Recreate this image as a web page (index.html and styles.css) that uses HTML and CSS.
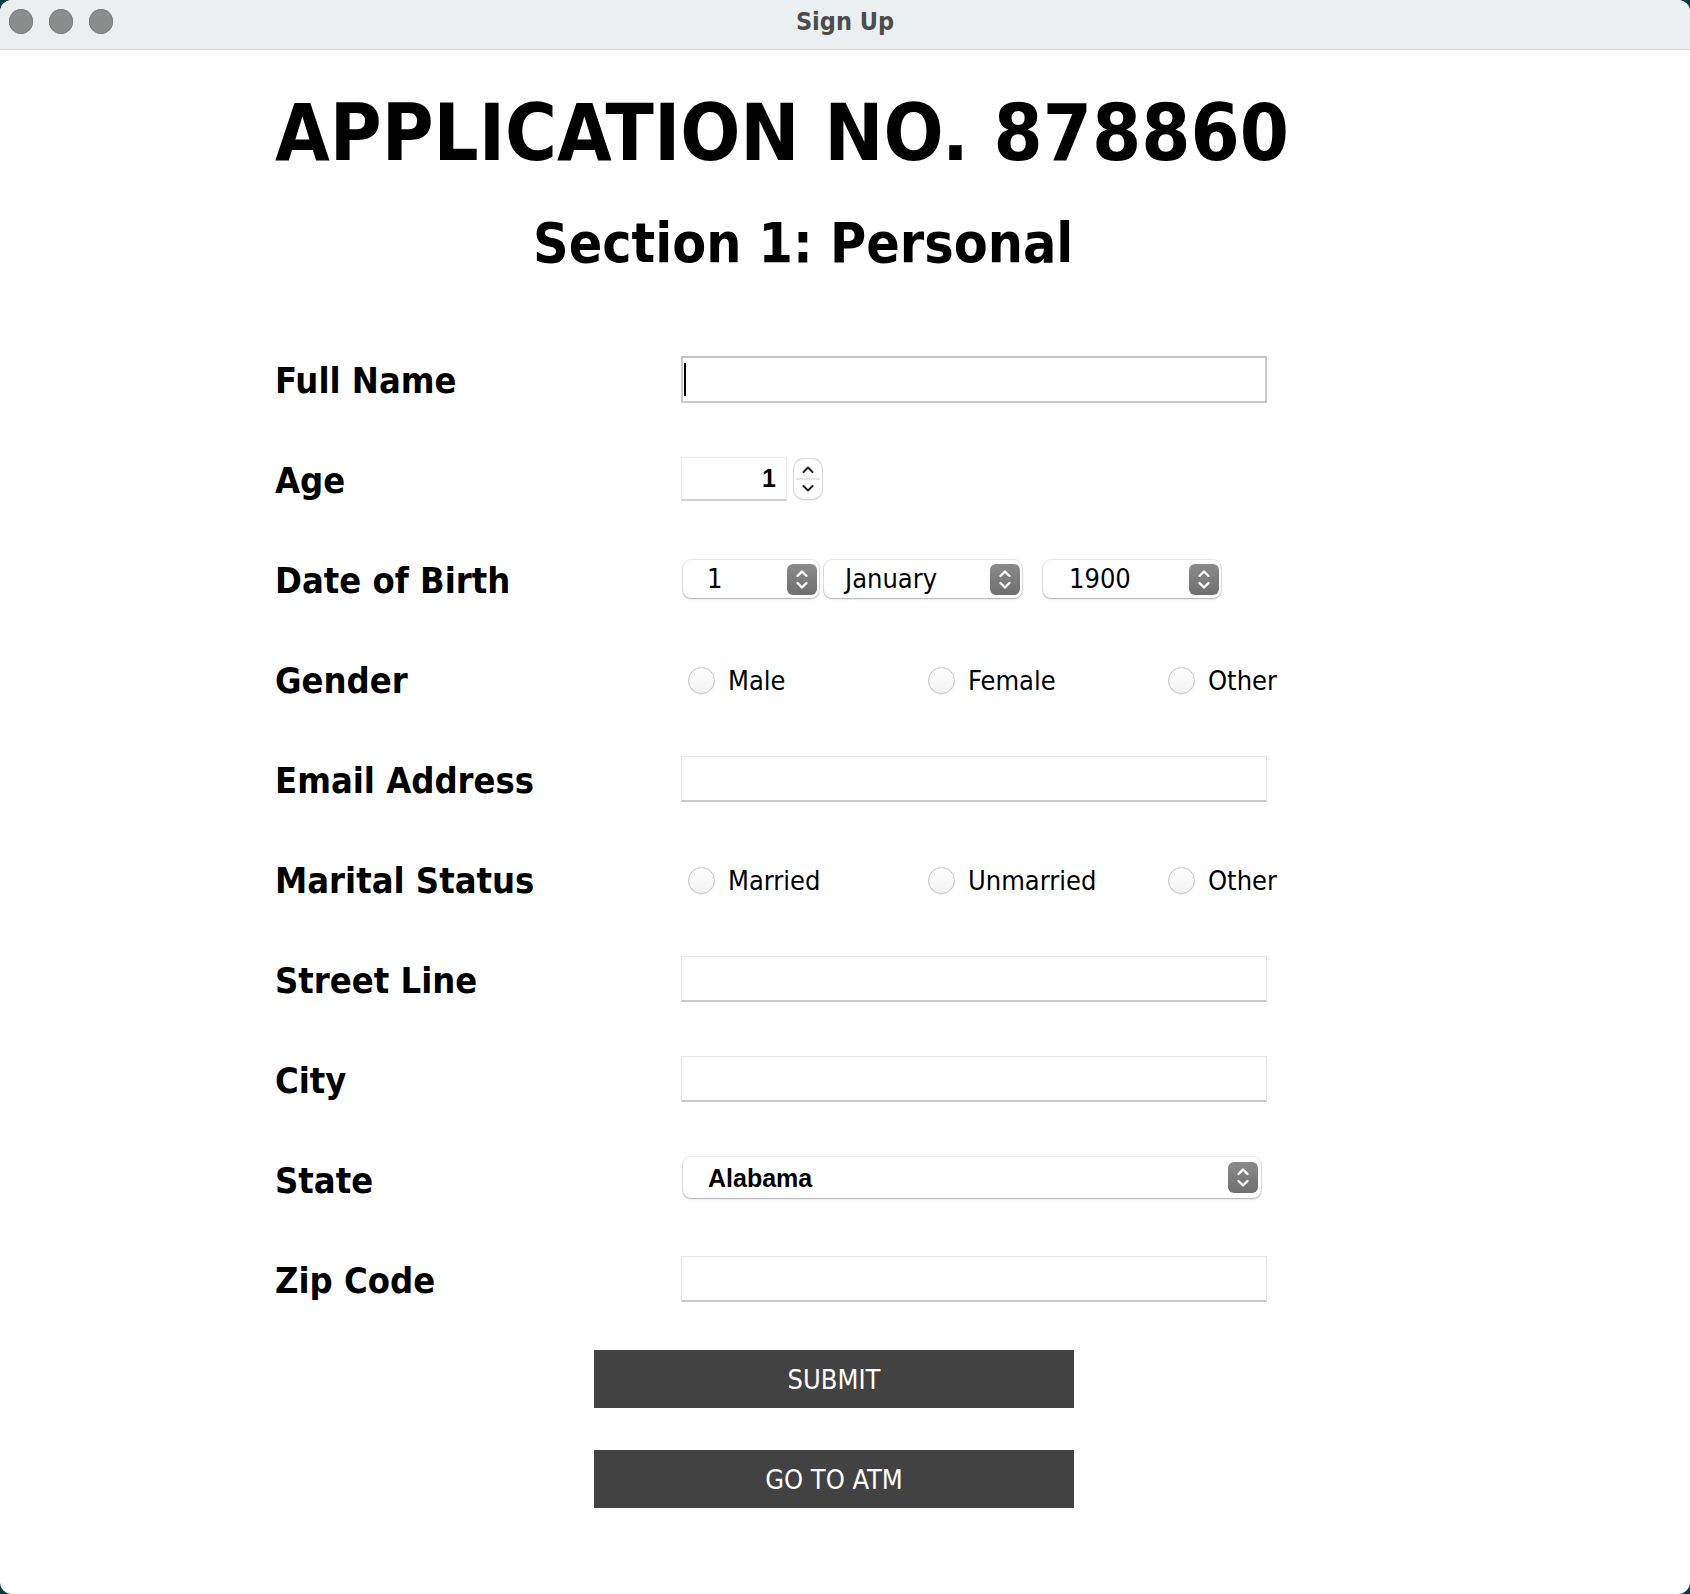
FILE: index.html
```html
<!DOCTYPE html>
<html lang="en">
<head>
<meta charset="utf-8">
<title>Sign Up</title>
<link rel="stylesheet" href="styles.css">
</head>
<body>
<div class="window">
  <header class="titlebar">
    <div class="lights"><span class="light"></span><span class="light"></span><span class="light"></span></div>
    <div class="wintitle">Sign Up</div>
    <div></div>
  </header>
  <main class="content">
    <h1 class="app-no">APPLICATION NO. 878860</h1>
    <h2 class="section">Section 1: Personal</h2>
    <div class="form">
      <div class="row">
        <span class="label">Full Name</span>
        <div class="textbox focused"><span class="caret"></span></div>
      </div>
      <div class="row">
        <span class="label">Age</span>
        <div class="spinner">
          <div class="numbox">1</div>
          <div class="stepper">
            <svg width="28" height="40" viewBox="0 0 28 40"><line x1="2" y1="20" x2="26" y2="20" stroke="#d6d6d6" stroke-width="1.2"/><path d="M9.5 13 L14 8.5 L18.5 13" fill="none" stroke="#222" stroke-width="2" stroke-linecap="round" stroke-linejoin="round"/><path d="M9.5 27 L14 31.5 L18.5 27" fill="none" stroke="#222" stroke-width="2" stroke-linecap="round" stroke-linejoin="round"/></svg>
          </div>
        </div>
      </div>
      <div class="row">
        <span class="label">Date of Birth</span>
        <div class="dob">
          <div class="combo combo-day"><span class="combo-text">1</span><span class="combo-btn"><svg width="30" height="31" viewBox="0 0 30 31"><path d="M10.5 12 L15 7.5 L19.5 12" fill="none" stroke="#fff" stroke-width="2.4" stroke-linecap="round" stroke-linejoin="round"/><path d="M10.5 19 L15 23.5 L19.5 19" fill="none" stroke="#fff" stroke-width="2.4" stroke-linecap="round" stroke-linejoin="round"/></svg></span></div>
          <div class="combo combo-month"><span class="combo-text">January</span><span class="combo-btn"><svg width="30" height="31" viewBox="0 0 30 31"><path d="M10.5 12 L15 7.5 L19.5 12" fill="none" stroke="#fff" stroke-width="2.4" stroke-linecap="round" stroke-linejoin="round"/><path d="M10.5 19 L15 23.5 L19.5 19" fill="none" stroke="#fff" stroke-width="2.4" stroke-linecap="round" stroke-linejoin="round"/></svg></span></div>
          <div class="combo combo-year"><span class="combo-text">1900</span><span class="combo-btn"><svg width="30" height="31" viewBox="0 0 30 31"><path d="M10.5 12 L15 7.5 L19.5 12" fill="none" stroke="#fff" stroke-width="2.4" stroke-linecap="round" stroke-linejoin="round"/><path d="M10.5 19 L15 23.5 L19.5 19" fill="none" stroke="#fff" stroke-width="2.4" stroke-linecap="round" stroke-linejoin="round"/></svg></span></div>
        </div>
      </div>
      <div class="row">
        <span class="label">Gender</span>
        <div class="radios">
          <div class="radio"><span class="dot"></span><span class="radio-text">Male</span></div>
          <div class="radio"><span class="dot"></span><span class="radio-text">Female</span></div>
          <div class="radio"><span class="dot"></span><span class="radio-text">Other</span></div>
        </div>
      </div>
      <div class="row">
        <span class="label">Email Address</span>
        <div class="textbox"></div>
      </div>
      <div class="row">
        <span class="label">Marital Status</span>
        <div class="radios">
          <div class="radio"><span class="dot"></span><span class="radio-text">Married</span></div>
          <div class="radio"><span class="dot"></span><span class="radio-text">Unmarried</span></div>
          <div class="radio"><span class="dot"></span><span class="radio-text">Other</span></div>
        </div>
      </div>
      <div class="row">
        <span class="label">Street Line</span>
        <div class="textbox"></div>
      </div>
      <div class="row">
        <span class="label">City</span>
        <div class="textbox"></div>
      </div>
      <div class="row">
        <span class="label">State</span>
        <div class="combo combo-state"><span class="state-text">Alabama</span><span class="combo-btn"><svg width="30" height="31" viewBox="0 0 30 31"><path d="M10.5 12 L15 7.5 L19.5 12" fill="none" stroke="#fff" stroke-width="2.4" stroke-linecap="round" stroke-linejoin="round"/><path d="M10.5 19 L15 23.5 L19.5 19" fill="none" stroke="#fff" stroke-width="2.4" stroke-linecap="round" stroke-linejoin="round"/></svg></span></div>
      </div>
      <div class="row">
        <span class="label">Zip Code</span>
        <div class="textbox"></div>
      </div>
    </div>
    <div class="actions">
      <button class="btn" type="button">SUBMIT</button>
      <button class="btn" type="button">GO TO ATM</button>
    </div>
  </main>
</div>
</body>
</html>
```
FILE: styles.css
```css
html, body {
  margin: 0;
  padding: 0;
  background: #083c45;
}
body {
  font-family: "DejaVu Sans Condensed", "DejaVu Sans", sans-serif;
  font-stretch: condensed;
  color: #000;
}
.window {
  width: 1690px;
  height: 1594px;
  background: #fff;
  border-radius: 12px;
  overflow: hidden;
}
.titlebar {
  height: 50px;
  box-sizing: border-box;
  background: #eceff0;
  border-bottom: 1px solid #d6d8d9;
  display: grid;
  grid-template-columns: 1fr auto 1fr;
  align-items: start;
  padding-top: 9px;
}
.lights {
  display: flex;
  gap: 16px;
  padding-left: 9px;
}
.light {
  width: 24px;
  height: 25px;
  border-radius: 50%;
  background: #8c8e8e;
  box-shadow: inset 0 0 0 1px #7d7f7f;
}
.wintitle {
  font-size: 25px;
  line-height: 25px;
  font-weight: bold;
  color: #4c4c4c;
}
.content {
  padding-left: 275px;
}
.app-no {
  margin: 44px 0 0 0;
  font-size: 78.7px;
  line-height: 78px;
  font-weight: bold;
  letter-spacing: 0;
}
.section {
  margin: 44px 0 0 258px;
  font-size: 55px;
  line-height: 55px;
  font-weight: bold;
}
.form {
  margin-top: 58px;
}
.row {
  display: grid;
  grid-template-columns: 406px 1fr;
  align-items: center;
  height: 100px;
}
.label {
  font-size: 36px;
  font-weight: bold;
  line-height: 40px;
  padding-top: 4px;
}
.textbox {
  width: 586px;
  height: 46px;
  box-sizing: border-box;
  background: #fff;
  border: 1px solid #e6e6e6;
  border-bottom: 2px solid #cacaca;
  display: flex;
  align-items: center;
}
.textbox.focused {
  height: 47px;
  border: 2px solid #c9c9c9;
  border-top-color: #c2c2c2;
  padding-left: 1px;
}
.caret {
  width: 2px;
  height: 33px;
  background: #000;
}
.spinner {
  display: flex;
  align-items: center;
  gap: 7px;
}
.numbox {
  width: 106px;
  height: 44px;
  box-sizing: border-box;
  border: 1px solid #ececec;
  border-bottom: 2px solid #cfcfcf;
  text-align: right;
  padding-right: 10px;
  font-family: "Liberation Sans", Arial, sans-serif;
  font-weight: bold;
  font-size: 25px;
  line-height: 41px;
}
.stepper {
  width: 28px;
  height: 40px;
  border-radius: 10px;
  background: #fff;
  box-shadow: 0 0 0 1px #d9d9d9, 0 1px 2px rgba(0,0,0,0.2);
  display: flex;
}
.dob {
  display: flex;
  align-items: center;
  padding-left: 2px;
}
.combo {
  position: relative;
  height: 38px;
  box-sizing: border-box;
  background: #fff;
  border-radius: 8px;
  box-shadow: 0 0 0 1px rgba(0,0,0,0.07), 0 1px 2px rgba(0,0,0,0.28);
  display: flex;
  align-items: center;
  justify-content: space-between;
  padding: 0 2px 0 24px;
}
.combo-day { width: 136px; }
.combo-month { width: 198px; margin-left: 5px; padding-left: 21px; }
.combo-year { width: 178px; margin-left: 21px; padding-left: 26px; }
.combo-text {
  font-size: 27px;
  line-height: 32px;
}
.combo-btn {
  width: 30px;
  height: 31px;
  border-radius: 6px;
  background: linear-gradient(#8b8b8b, #6f6f6f);
  display: flex;
}
.combo-state {
  width: 578px;
  height: 41px;
  margin-left: 2px;
  margin-bottom: 3px;
  padding-left: 25px;
  padding-right: 3px;
}
.state-text {
  font-family: "Liberation Sans", Arial, sans-serif;
  font-weight: bold;
  font-size: 25px;
  line-height: 30px;
}
.radios {
  display: flex;
  padding-left: 7px;
  padding-top: 3px;
}
.radio {
  width: 240px;
  display: flex;
  align-items: center;
  gap: 13px;
}
.dot {
  width: 27px;
  height: 27px;
  box-sizing: border-box;
  border-radius: 50%;
  border: 1px solid #c6c6c6;
  background: linear-gradient(#ffffff, #f2f2f2);
  box-shadow: 0 1px 1px rgba(0,0,0,0.08);
}
.radio-text {
  font-size: 27px;
  line-height: 32px;
}
.actions {
  display: flex;
  flex-direction: column;
  gap: 42px;
  margin-top: 21px;
  padding-left: 319px;
}
.btn {
  width: 480px;
  height: 58px;
  border: none;
  background: #424242;
  color: #fff;
  font-family: "DejaVu Sans Condensed", "DejaVu Sans", sans-serif;
  font-stretch: condensed;
  font-size: 27px;
  padding: 0;
}
```
